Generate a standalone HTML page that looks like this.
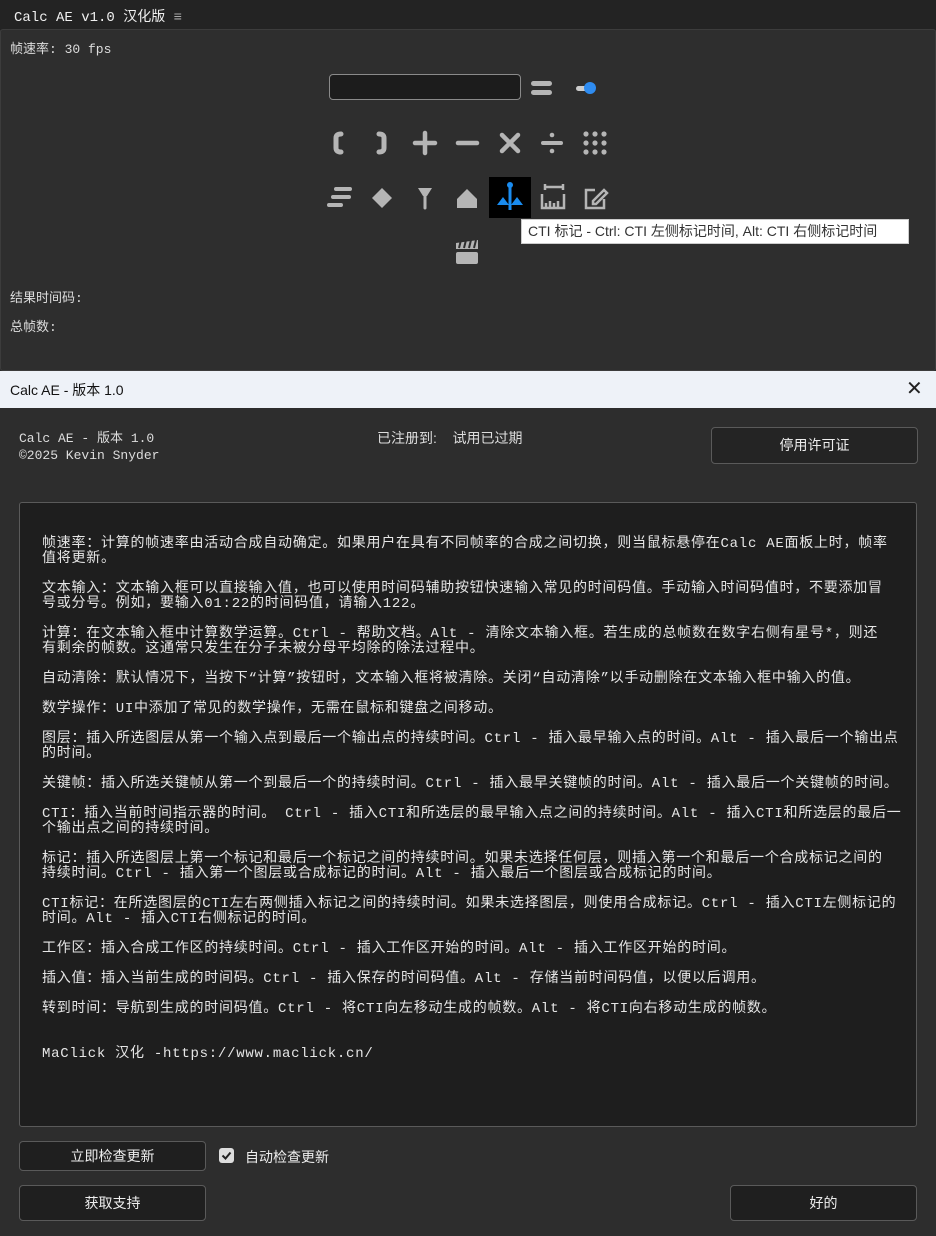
<!DOCTYPE html>
<html><head><meta charset="utf-8"><style>
*{margin:0;padding:0;box-sizing:border-box}
body{width:936px;height:1236px;background:#2c2c2c;position:relative;overflow:hidden;font-family:"Liberation Sans","Noto Sans CJK SC",sans-serif;color:#ddd}
.abs{position:absolute}
.mono{font-family:"Liberation Mono","Noto Sans CJK SC",monospace}
.txt p{margin-bottom:15px;line-height:15px;white-space:nowrap}
.btn{position:absolute;background:#1f1f1f;border:1px solid #5a5a5a;border-radius:4px;color:#eee;font-size:14px;text-align:center}
</style></head><body>
<div class="abs" style="left:0;top:0;width:936px;height:30px;background:#232323"></div>
<div class="abs mono" style="left:14px;top:6px;font-size:14px;color:#f0f0f0">Calc AE v1.0 汉化版 <span style="color:#aaa">≡</span></div>
<div class="abs" style="left:0;top:29px;width:936px;height:342px;background:#2e2e2e;border:1px solid #3c3c3c;border-radius:3px"></div>
<div class="abs mono" style="left:10px;top:38px;font-size:13px;color:#ddd">帧速率: 30 fps</div>
<div class="abs" style="left:329px;top:74px;width:192px;height:26px;background:#1c1c1c;border:1px solid #8a8a8a;border-radius:4px"></div>
<svg class="abs" style="left:0;top:0" width="936" height="370">
<g fill="#b5b5b5" stroke="#b5b5b5" stroke-linecap="round">
<rect x="531" y="81" width="21" height="5" rx="2.5" stroke="none"/><rect x="531" y="90" width="21" height="5" rx="2.5" stroke="none"/>
<rect x="576" y="86" width="12" height="5" rx="2.5" stroke="none" fill="#ccc"/><circle cx="590" cy="88" r="6" fill="#2f8cf0" stroke="none"/>
<path d="M341 134 Q336 134 336 138 L336 148 Q336 152 341 152" fill="none" stroke-width="5"/>
<path d="M379 134 Q384 134 384 138 L384 148 Q384 152 379 152" fill="none" stroke-width="5"/>
<path d="M425 133v20M415 143h20" stroke-width="4.5"/>
<path d="M458 143h19" stroke-width="4.5"/>
<path d="M502 135l16 16M518 135l-16 16" stroke-width="4.5"/>
<path d="M543 143h18" stroke-width="4"/><circle cx="552" cy="135" r="2.3" stroke="none"/><circle cx="552" cy="151" r="2.3" stroke="none"/>
<g stroke="none"><circle cx="586" cy="134" r="2.6"/><circle cx="595" cy="134" r="2.6"/><circle cx="604" cy="134" r="2.6"/><circle cx="586" cy="143" r="2.6"/><circle cx="595" cy="143" r="2.6"/><circle cx="604" cy="143" r="2.6"/><circle cx="586" cy="152" r="2.6"/><circle cx="595" cy="152" r="2.6"/><circle cx="604" cy="152" r="2.6"/></g>
<path d="M336 189h14M333 197h16M329 205h12" stroke-width="4"/>
<path d="M382 188l10 10-10 10-10-10z" stroke="none"/>
<path d="M418 188h14l-5 8h-4z" stroke="none"/><path d="M425 196v12" stroke-width="3"/>
<path d="M457 208v-9l10-10 10 10v9z" stroke="none"/>
</g>
<rect x="489" y="177" width="42" height="41" fill="#000"/>
<g fill="#1a8cf0"><path d="M510 183v27" stroke="#1a8cf0" stroke-width="3"/><circle cx="510" cy="185" r="3"/><path d="M497 205l6-8 6 8z"/><path d="M511 205l6-8 6 8z"/></g>
<g fill="none" stroke="#b5b5b5" stroke-width="2.5">
<path d="M542 194v14h22v-14M546 208v-5M550 208v-7M554 208v-5M558 208v-7M545 187h18M545 184v6M563 184v6"/>
<path d="M595 190h-9v18h18v-9M593 201l11-11 3 3-11 11h-3z"/>
</g>
<g fill="#b5b5b5"><rect x="456" y="252" width="22" height="12" rx="2"/><path d="M456 243l22-3v9h-22z"/></g>
<g stroke="#2e2e2e" stroke-width="2"><path d="M461 240l-2 8M466 240l-2 8M471 240l-2 8M476 240l-2 8"/></g>
</svg>
<div class="abs" style="left:521px;top:219px;width:388px;height:25px;background:#fff;border:1px solid #ccc;color:#333;font-size:14px;line-height:23px;padding-left:6px;white-space:nowrap">CTI 标记 - Ctrl: CTI 左侧标记时间, Alt: CTI 右侧标记时间</div>
<div class="abs mono" style="left:10px;top:287px;font-size:13px">结果时间码:</div>
<div class="abs mono" style="left:10px;top:316px;font-size:13px">总帧数:</div>
<div class="abs" style="left:0;top:371px;width:936px;height:37px;background:#eef2f8"></div>
<div class="abs" style="left:10px;top:380px;font-size:14px;color:#111">Calc AE - 版本 1.0</div>
<div class="abs" style="left:906px;top:376px;font-size:20px;color:#222">✕</div>
<div class="abs" style="left:0;top:408px;width:936px;height:828px;background:#2d2d2d"></div>
<div class="abs mono" style="left:19px;top:430px;font-size:13px;line-height:17px">Calc AE - 版本 1.0<br>©2025 Kevin Snyder</div>
<div class="abs" style="left:377px;top:428px;font-size:14px">已注册到:&nbsp;&nbsp;&nbsp;&nbsp;试用已过期</div>
<div class="btn" style="left:711px;top:427px;width:207px;height:37px;line-height:35px;background:#242424">停用许可证</div>
<div class="abs" style="left:19px;top:502px;width:898px;height:625px;background:#1e1e1e;border:1px solid #5a5a5a;border-radius:3px"></div>
<div class="abs mono txt" style="left:42px;top:537px;font-size:14px;letter-spacing:0.75px;color:#e6e6e6">
<p>帧速率：计算的帧速率由活动合成自动确定。如果用户在具有不同帧率的合成之间切换，则当鼠标悬停在Calc AE面板上时，帧率<br>值将更新。</p>
<p>文本输入：文本输入框可以直接输入值，也可以使用时间码辅助按钮快速输入常见的时间码值。手动输入时间码值时，不要添加冒<br>号或分号。例如，要输入01:22的时间码值，请输入122。</p>
<p>计算：在文本输入框中计算数学运算。Ctrl - 帮助文档。Alt - 清除文本输入框。若生成的总帧数在数字右侧有星号*，则还<br>有剩余的帧数。这通常只发生在分子未被分母平均除的除法过程中。</p>
<p>自动清除：默认情况下，当按下“计算”按钮时，文本输入框将被清除。关闭“自动清除”以手动删除在文本输入框中输入的值。</p>
<p>数学操作：UI中添加了常见的数学操作，无需在鼠标和键盘之间移动。</p>
<p>图层：插入所选图层从第一个输入点到最后一个输出点的持续时间。Ctrl - 插入最早输入点的时间。Alt - 插入最后一个输出点<br>的时间。</p>
<p>关键帧：插入所选关键帧从第一个到最后一个的持续时间。Ctrl - 插入最早关键帧的时间。Alt - 插入最后一个关键帧的时间。</p>
<p>CTI：插入当前时间指示器的时间。 Ctrl - 插入CTI和所选层的最早输入点之间的持续时间。Alt - 插入CTI和所选层的最后一<br>个输出点之间的持续时间。</p>
<p>标记：插入所选图层上第一个标记和最后一个标记之间的持续时间。如果未选择任何层，则插入第一个和最后一个合成标记之间的<br>持续时间。Ctrl - 插入第一个图层或合成标记的时间。Alt - 插入最后一个图层或合成标记的时间。</p>
<p>CTI标记：在所选图层的CTI左右两侧插入标记之间的持续时间。如果未选择图层，则使用合成标记。Ctrl - 插入CTI左侧标记的<br>时间。Alt - 插入CTI右侧标记的时间。</p>
<p>工作区：插入合成工作区的持续时间。Ctrl - 插入工作区开始的时间。Alt - 插入工作区开始的时间。</p>
<p>插入值：插入当前生成的时间码。Ctrl - 插入保存的时间码值。Alt - 存储当前时间码值，以便以后调用。</p>
<p>转到时间：导航到生成的时间码值。Ctrl - 将CTI向左移动生成的帧数。Alt - 将CTI向右移动生成的帧数。</p>
<p style="margin-top:30px">MaClick 汉化 -https://www.maclick.cn/</p>
</div>
<div class="btn" style="left:19px;top:1141px;width:187px;height:30px;line-height:28px">立即检查更新</div>
<div class="abs" style="left:219px;top:1148px;width:15px;height:15px;background:#ddd;border-radius:3px"></div>
<svg class="abs" style="left:219px;top:1148px" width="15" height="15"><path d="M3.5 7.5l3 3 5-6" fill="none" stroke="#222" stroke-width="2"/></svg>
<div class="abs" style="left:245px;top:1147px;font-size:14px;color:#eee">自动检查更新</div>
<div class="btn" style="left:19px;top:1185px;width:187px;height:36px;line-height:34px">获取支持</div>
<div class="btn" style="left:730px;top:1185px;width:187px;height:36px;line-height:34px">好的</div>
</body></html>
